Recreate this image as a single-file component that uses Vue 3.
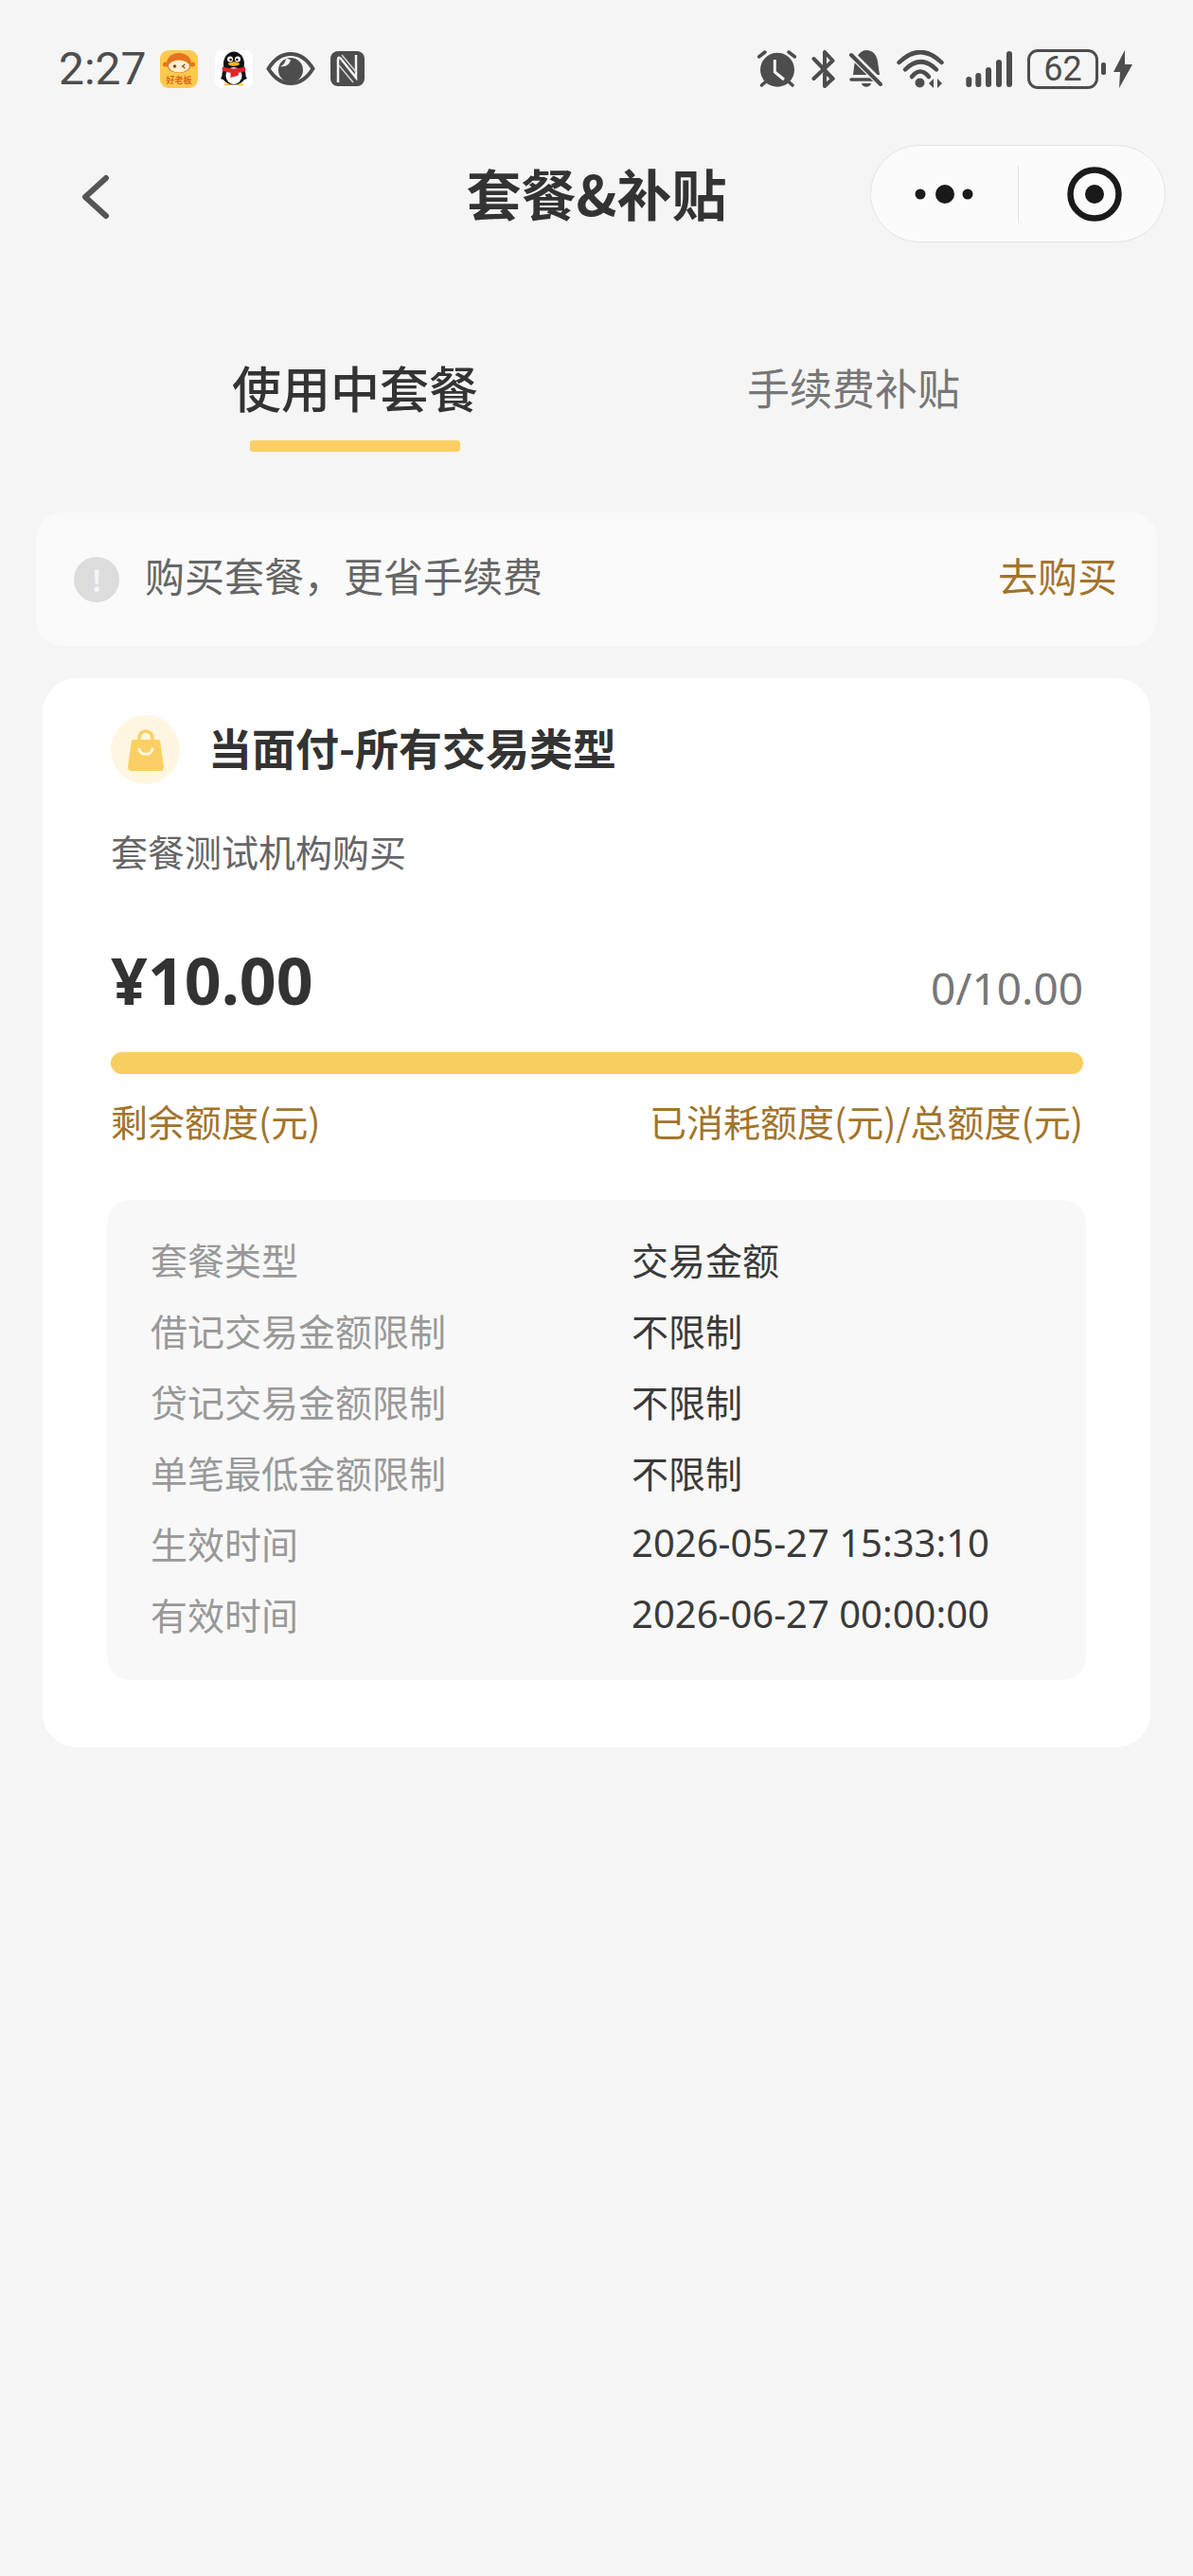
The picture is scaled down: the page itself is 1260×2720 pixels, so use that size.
<template>
  <div class="page">
    <!-- status bar -->
    <div class="status-bar">
      <div class="status-left">
        <span class="time">2:27</span>
        <svg class="app-icon" viewBox="0 0 40 40">
          <rect width="40" height="40" rx="9" fill="#fdc94f" />
          <path d="M20 3C12 3 7 8 7 14c0 6 5 10 13 10s13-4 13-10c0-6-5-11-13-11z" fill="#e5741c" />
          <circle cx="5.500" cy="15" r="2.500" fill="#e5741c" />
          <circle cx="34.500" cy="15" r="2.500" fill="#e5741c" />
          <ellipse cx="20" cy="17" rx="11" ry="6.500" fill="#fdeed2" />
          <circle cx="15.500" cy="17" r="1.800" fill="#8a4a14" />
          <path d="M26.500 15l-3 2 3 2" fill="none" stroke="#8a4a14" stroke-width="1.200" />
          <text x="20" y="35" text-anchor="middle" class="app-icon-text">好老板</text>
        </svg>
        <svg class="app-icon qq" viewBox="0 0 40 40">
          <rect width="40" height="40" rx="8" fill="#fff" />
          <ellipse cx="20" cy="14.500" rx="11" ry="13" fill="#111" />
          <ellipse cx="20" cy="26" rx="12.500" ry="10.500" fill="#111" />
          <path d="M6 30l5-9v11zM34 30l-5-9v11z" fill="#111" />
          <ellipse cx="20" cy="27" rx="8.500" ry="9" fill="#fff" />
          <circle cx="16" cy="9.500" r="3" fill="#fff" />
          <circle cx="24" cy="9.500" r="3" fill="#fff" />
          <circle cx="16.600" cy="10" r="1.300" fill="#111" />
          <circle cx="23.400" cy="10" r="1.300" fill="#111" />
          <ellipse cx="20" cy="14.500" rx="6" ry="2.200" fill="#f5b423" />
          <path d="M8 17.500c8 2.500 16 2.500 24 0l.5 4c-3 1.500-5 2-7.500 2.300l-.5 3-8 2.200v-5.200c-3-.3-6-1-9-2.500z" fill="#e3222a" />
          <path d="M9 37c2-2 6-2 8.500 0zM22.500 37c2.500-2 6.500-2 8.500 0z" fill="#f5b423" />
        </svg>
        <svg class="eye" viewBox="0 0 52 35">
          <path d="M2.500 17.500C9 7 17 2 26 2s17 5 23.500 15.500C43 28 35 33 26 33S9 28 2.500 17.500z" fill="none" stroke="#4d4d4d" stroke-width="4" />
          <circle cx="26" cy="19" r="13" fill="#4d4d4d" />
          <path d="M15 15c3-1 5-3 6-8 2 0 3 .5 5 1-1 5-5 8-11 7z" fill="#f5f5f5" />
        </svg>
        <svg class="nfc" viewBox="0 0 36 37">
          <rect width="36" height="37" rx="8" fill="#4d4d4d" />
          <path d="M8 33V9q0-4 3-1l16 20V4" fill="none" stroke="#f5f5f5" stroke-width="2.500" />
          <path d="M12 4l15 18M24 33L9 15" fill="none" stroke="#d8d8d8" stroke-width="1.500" />
        </svg>
      </div>
      <div class="status-right">
        <svg class="st-alarm" viewBox="0 0 41 39">
          <circle cx="21" cy="20.700" r="18" fill="#4d4d4d" />
          <path d="M18.300 10v13l9.700 8" fill="none" stroke="#f5f5f5" stroke-width="3" />
          <path d="M1.500 7L8 2M39.500 7L33 2M4.500 37L9 33M37 37l-4.500-4" stroke="#4d4d4d" stroke-width="3.500" stroke-linecap="round" />
        </svg>
        <svg class="st-bt" viewBox="0 0 25 40">
          <path d="M2.500 30L22.500 11 14 2v15M14 25v13l8.500-8-6-5" fill="none" stroke="#4d4d4d" stroke-width="4" stroke-linejoin="round" stroke-linecap="round" />
          <path d="M2.500 9L22.500 30" fill="none" stroke="#4d4d4d" stroke-width="4" stroke-linecap="round" />
        </svg>
        <svg class="st-bell" viewBox="0 0 35 40">
          <path d="M18 0c7 0 11 5 12 12l2 14H4l1-8C6 8 11 0 18 0z" fill="#4d4d4d" />
          <path d="M2 31h25" stroke="#4d4d4d" stroke-width="3.500" stroke-linecap="round" />
          <path d="M13 35h10c-1 5-9 5-10 0z" fill="#4d4d4d" />
          <path d="M3 5l31 31" stroke="#f5f5f5" stroke-width="8" />
          <path d="M2 5l31 31" stroke="#4d4d4d" stroke-width="4" stroke-linecap="round" />
        </svg>
        <svg class="st-wifi" viewBox="0 0 50 40">
          <path d="M2.500 13Q25-9 47.500 13" fill="none" stroke="#4d4d4d" stroke-width="4.500" stroke-linecap="round" />
          <path d="M9 20.500Q25.500 4 42 20.500" fill="none" stroke="#4d4d4d" stroke-width="4.500" stroke-linecap="round" />
          <path d="M16 28Q25 17 34 28" fill="none" stroke="#4d4d4d" stroke-width="4.500" stroke-linecap="round" />
          <circle cx="24.500" cy="34.500" r="5" fill="#4d4d4d" />
          <path d="M34 35l5-5v10zM43 30l5 5-5 5z" fill="#4d4d4d" />
        </svg>
        <svg class="st-signal" viewBox="0 0 49 40">
          <path d="M3.300 31v5M13.300 27v9M24 21v15M35 13v23M46 4v32" stroke="#4d4d4d" stroke-width="6" stroke-linecap="round" />
        </svg>
        <div class="battery"><span>62</span></div>
        <div class="battery-nub"></div>
        <svg class="st-bolt" viewBox="0 0 20 40">
          <path d="M12 0L0 23h7L6 40l14-25h-8z" fill="#4d4d4d" />
        </svg>
      </div>
    </div>

    <!-- nav -->
    <div class="nav">
      <svg class="back" viewBox="0 0 30 48">
        <path d="M26 4L4 24l22 20" fill="none" stroke="#555" stroke-width="6" stroke-linecap="round" stroke-linejoin="round" />
      </svg>
      <div class="title">套餐&amp;补贴</div>
      <div class="capsule">
        <svg class="dots" viewBox="0 0 62 22">
          <circle cx="6" cy="11" r="5.500" fill="#1a1a1a" />
          <circle cx="32" cy="11" r="10" fill="#1a1a1a" />
          <circle cx="56" cy="11" r="5.500" fill="#1a1a1a" />
        </svg>
        <div class="capsule-line"></div>
        <svg class="target" viewBox="0 0 58 58">
          <circle cx="29" cy="29" r="25.500" fill="none" stroke="#1a1a1a" stroke-width="6.500" />
          <circle cx="29" cy="29" r="10" fill="#1a1a1a" />
        </svg>
      </div>
    </div>

    <!-- tabs -->
    <div class="tabs">
      <div class="tab active">使用中套餐<i></i></div>
      <div class="tab">手续费补贴</div>
    </div>

    <!-- notice -->
    <div class="notice">
      <div class="notice-icon">!</div>
      <div class="notice-text">购买套餐，更省手续费</div>
      <div class="notice-link">去购买</div>
    </div>

    <!-- package card -->
    <div class="card">
      <div class="card-head">
        <div class="bag-wrap">
          <svg class="bag" viewBox="0 0 38 44">
            <path d="M12 12V9a7 7 0 0 1 14 0v3" fill="none" stroke="#fbcf63" stroke-width="3.500" />
            <path d="M6 11h26c1 0 2 1 2.200 2L38 40c0 2-1 4-3 4H3c-2 0-3-2-3-4L3.800 13C4 12 5 11 6 11z" fill="#fbcf63" />
            <path d="M12 21c1 7 13 7 14 0" fill="none" stroke="#fff7e0" stroke-width="3" stroke-linecap="round" />
          </svg>
        </div>
        <div class="card-title">当面付-所有交易类型</div>
      </div>
      <div class="card-sub">套餐测试机构购买</div>
      <div class="amount-row">
        <div class="amount">¥10.00</div>
        <div class="used">0/10.00</div>
      </div>
      <div class="bar"></div>
      <div class="bar-labels">
        <span>剩余额度(元)</span>
        <span>已消耗额度(元)/总额度(元)</span>
      </div>
      <div class="details">
        <div class="detail-row" v-for="row in rows" :key="row.label">
          <span class="detail-label">{{ row.label }}</span>
          <span class="detail-value" :class="{ num: row.num }">{{ row.value }}</span>
        </div>
      </div>
    </div>
  </div>
</template>

<script setup>
const rows = [
  { label: '套餐类型', value: '交易金额' },
  { label: '借记交易金额限制', value: '不限制' },
  { label: '贷记交易金额限制', value: '不限制' },
  { label: '单笔最低金额限制', value: '不限制' },
  { label: '生效时间', value: '2026-05-27 15:33:10', num: true },
  { label: '有效时间', value: '2026-06-27 00:00:00', num: true }
]
</script>

<style>
html,
body {
  background: #f5f5f5;
}
</style>

<style scoped>
.page {
  width: 1260px;
  height: 2720px;
  background: #f5f5f5;
  font-family: "Noto Sans CJK SC", "Noto Sans", sans-serif;
  color: #333;
  overflow: hidden;
}

.status-bar {
  display: flex;
  justify-content: space-between;
  align-items: center;
  height: 41px;
  padding: 52px 64px 0 62px;
}

.status-left,
.status-right {
  display: flex;
  align-items: center;
}

.time {
  font-family: Roboto, sans-serif;
  font-size: 48px;
  line-height: 41px;
  color: #4d4d4d;
  width: 107px;
}

.app-icon {
  width: 40px;
  height: 40px;
}

.app-icon.qq {
  margin-left: 18px;
}

.app-icon-text {
  font-size: 9px;
  fill: #d9651a;
  font-weight: 700;
}

.eye {
  width: 52px;
  height: 35px;
  margin-left: 14px;
}

.nfc {
  width: 36px;
  height: 37px;
  margin-left: 16px;
}

.st-alarm {
  width: 41px;
  height: 39px;
}

.st-bt {
  width: 25px;
  height: 40px;
  margin-left: 16px;
}

.st-bell {
  width: 35px;
  height: 40px;
  margin-left: 15px;
}

.st-wifi {
  width: 50px;
  height: 40px;
  margin-left: 15px;
}

.st-signal {
  width: 49px;
  height: 40px;
  margin-left: 23px;
}

.battery {
  width: 75px;
  height: 42px;
  margin-left: 16px;
  box-sizing: border-box;
  border: 3px solid #4d4d4d;
  border-radius: 11px;
  display: flex;
  align-items: center;
  justify-content: center;
}

.battery span {
  font-family: Roboto, sans-serif;
  font-size: 36px;
  line-height: 36px;
  color: #4d4d4d;
}

.battery-nub {
  width: 5px;
  height: 13px;
  margin-left: 3px;
  border-radius: 2px;
  background: #4d4d4d;
}

.st-bolt {
  width: 20px;
  height: 40px;
  margin-left: 8px;
}

.nav {
  display: grid;
  grid-template-columns: 1fr auto 1fr;
  align-items: center;
  margin-top: 60px;
  padding: 0 29px;
  height: 103px;
}

.back {
  width: 30px;
  height: 48px;
  margin: 6px 0 0 57px;
}

.title {
  font-size: 58px;
  font-weight: 700;
  color: #333;
  line-height: 100px;
  padding-bottom: 3px;
}

.capsule {
  justify-self: end;
  box-sizing: border-box;
  width: 312px;
  height: 103px;
  border: 1px solid #e4e4e4;
  border-radius: 52px;
  background: #fbfbfb;
  display: flex;
  align-items: center;
  padding-left: 46px;
}

.dots {
  width: 62px;
  height: 22px;
}

.capsule-line {
  width: 1px;
  height: 60px;
  margin-left: 47px;
  background: #e2e2e2;
}

.target {
  width: 58px;
  height: 58px;
  margin-left: 51px;
}

.tabs {
  display: flex;
  margin-top: 123px;
  padding-bottom: 38px;
}

.tab {
  position: relative;
  flex: none;
  font-size: 45px;
  line-height: 60px;
  color: #777;
  text-align: center;
  margin-left: 284px;
}

.tab.active {
  font-size: 52px;
  font-weight: 500;
  color: #333;
  margin-left: 245px;
}

.tab i {
  position: absolute;
  left: 19px;
  right: 19px;
  top: 86px;
  height: 12px;
  border-radius: 3px;
  background: #fbcf63;
}

.notice {
  display: flex;
  align-items: center;
  box-sizing: border-box;
  height: 141px;
  margin: 64px 38px 0;
  padding: 0 42px 0 40px;
  background: #fafafa;
  border-radius: 28px;
}

.notice-icon {
  width: 48px;
  height: 48px;
  border-radius: 50%;
  background: #dcdcdc;
  color: #f5f5f5;
  font-size: 30px;
  font-weight: 700;
  line-height: 48px;
  text-align: center;
}

.notice-text {
  flex: 1;
  margin: 0 0 9px 27px;
  font-size: 42px;
  line-height: 50px;
  color: #666;
}

.notice-link {
  margin-bottom: 9px;
  font-size: 42px;
  line-height: 50px;
  color: #a2742a;
}

.card {
  margin: 34px 45px 0;
  padding: 39px 71px 71px 72px;
  background: #fff;
  border-radius: 36px;
}

.card-head {
  display: flex;
  align-items: center;
}

.bag-wrap {
  width: 73px;
  height: 73px;
  border-radius: 50%;
  background: #fff6e1;
  display: flex;
  align-items: center;
  justify-content: center;
}

.bag {
  width: 38px;
  height: 44px;
}

.card-title {
  margin: 0 0 8px 30px;
  font-size: 46px;
  font-weight: 700;
  line-height: 60px;
  color: #333;
}

.card-sub {
  margin-top: 45px;
  font-size: 39px;
  line-height: 50px;
  color: #666;
}

.amount-row {
  display: flex;
  justify-content: space-between;
  align-items: baseline;
  margin-top: 72px;
  height: 80px;
}

.amount {
  font-family: "Noto Sans", sans-serif;
  font-size: 68px;
  font-weight: 700;
  line-height: 80px;
  color: #333;
}

.used {
  font-family: "Noto Sans", sans-serif;
  font-size: 46px;
  line-height: 60px;
  color: #777;
}

.bar {
  margin-top: 36px;
  height: 23px;
  border-radius: 12px;
  background: #f9ce60;
}

.bar-labels {
  display: flex;
  justify-content: space-between;
  margin-top: 24px;
  font-size: 39px;
  line-height: 50px;
  color: #a2742a;
}

.details {
  margin: 59px -3px 0 -4px;
  padding: 24px 0 33px 46px;
  background: #f8f8f8;
  border-radius: 24px;
}

.detail-row {
  display: flex;
  height: 75px;
  align-items: center;
  font-size: 39px;
}

.detail-label {
  width: 508px;
  color: #999;
}

.detail-value {
  color: #3a3a3a;
}

.detail-value.num {
  font-family: "Noto Sans", sans-serif;
  font-size: 40px;
}
</style>
